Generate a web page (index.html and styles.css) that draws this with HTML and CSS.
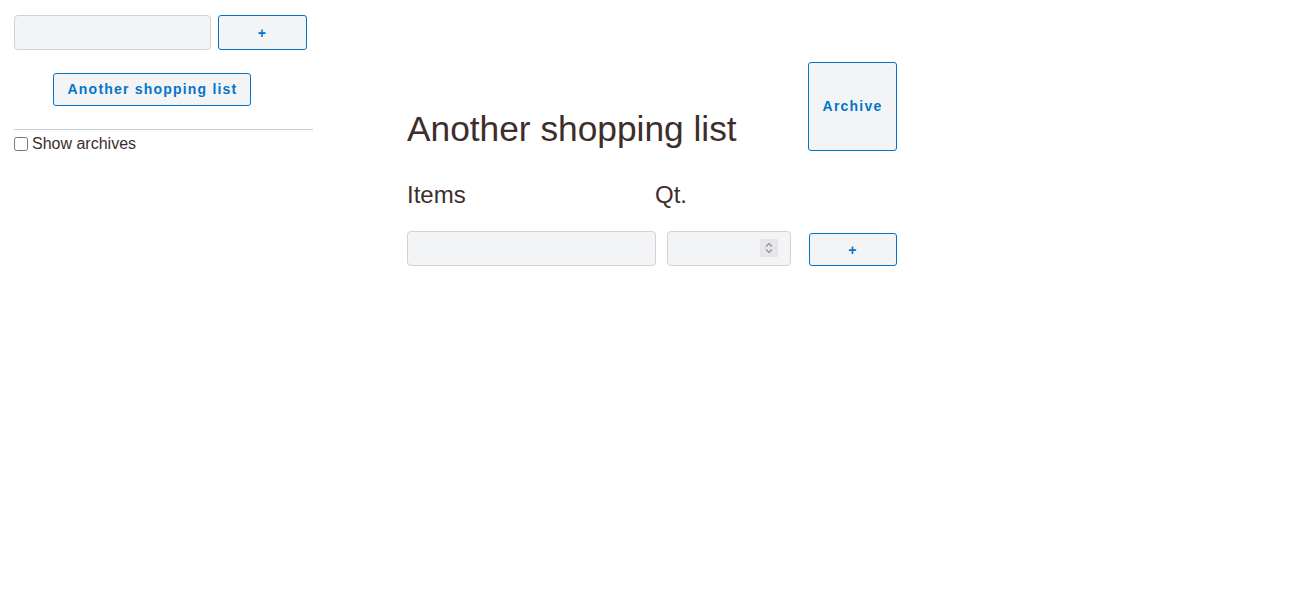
FILE: index.html
```html
<!DOCTYPE html>
<html lang="en">
<head>
<meta charset="utf-8">
<title>Shopping lists</title>
<link rel="stylesheet" href="styles.css">
</head>
<body>
<div class="app">
  <aside class="sidebar">
    <form class="new-list">
      <input class="field list-name" type="text">
      <button class="btn btn-add" type="button">+</button>
    </form>
    <div class="lists">
      <button class="btn btn-list" type="button">Another shopping list</button>
    </div>
    <hr class="divider">
    <label class="archives"><input type="checkbox" class="check">Show archives</label>
  </aside>
  <main class="main">
    <div class="header">
      <h1 class="title">Another shopping list</h1>
      <button class="btn btn-archive" type="button">Archive</button>
    </div>
    <div class="labels">
      <span class="label label-items">Items</span>
      <span class="label">Qt.</span>
    </div>
    <div class="item-row">
      <input class="field item-name" type="text">
      <span class="qty-wrap">
        <input class="field item-qty" type="number">
        <span class="spinner" aria-hidden="true">
          <svg width="18" height="18" viewBox="0 0 18 18"><path d="M6 7.5 L9 4.5 L12 7.5 M6 10.5 L9 13.5 L12 10.5" fill="none" stroke="#8e8e92" stroke-width="1.2"/></svg>
        </span>
      </span>
      <button class="btn btn-add btn-item" type="button">+</button>
    </div>
  </main>
</div>
</body>
</html>
```
FILE: styles.css
```css
html, body {
  margin: 0;
  padding: 0;
  background: #ffffff;
}
body {
  font-family: "Liberation Sans", Arial, sans-serif;
  color: #3d2e2b;
}
.app {
  display: flex;
  padding: 15px 0 0 14px;
}
.sidebar {
  width: 299px;
  flex: none;
}
.new-list {
  display: flex;
  gap: 7px;
  margin: 0;
}
.field {
  box-sizing: border-box;
  height: 35px;
  background: #f3f4f6;
  border: 1px solid #d2d2d4;
  border-radius: 4px;
  padding: 0 8px;
  font-family: "Liberation Sans", Arial, sans-serif;
  font-size: 16px;
  color: #3d2e2b;
  margin: 0;
}
.list-name {
  width: 197px;
}
.btn {
  box-sizing: border-box;
  background: #f3f4f6;
  border: 1px solid #0474cb;
  border-radius: 3px;
  color: #0474cb;
  font-family: "Liberation Sans", Arial, sans-serif;
  font-weight: bold;
  font-size: 14px;
  letter-spacing: 1.2px;
  padding: 0;
  margin: 0;
  white-space: nowrap;
  cursor: pointer;
}
.btn-add {
  width: 89px;
  height: 35px;
}
.lists {
  display: flex;
  margin-top: 23px;
  padding-left: 39px;
}
.btn-list {
  height: 33px;
  width: 198px;
  padding: 0 0 2px 1px;
}
.divider {
  margin: 23px 0 0 0;
  border: 0;
  border-top: 1px solid #cfcfcf;
  height: 0;
}
.archives {
  display: flex;
  align-items: center;
  margin-top: 5px;
  font-size: 16px;
  line-height: 18px;
}
.check {
  margin: 0 4px 0 0;
  width: 14px;
  height: 14px;
}
.main {
  margin-left: 94px;
  width: 490px;
}
.header {
  display: flex;
  justify-content: space-between;
  align-items: flex-end;
  margin-top: 47px;
}
.title {
  font-size: 35.3px;
  font-weight: normal;
  margin: 0 0 2px 0;
  line-height: 40px;
}
.btn-archive {
  width: 89px;
  height: 89px;
  padding-bottom: 2px;
}
.labels {
  display: flex;
  margin-top: 30px;
  font-size: 24px;
  line-height: 28px;
}
.label-items {
  width: 248px;
}
.item-row {
  display: flex;
  align-items: flex-end;
  margin-top: 22px;
}
.item-name {
  width: 249px;
}
.qty-wrap {
  position: relative;
  display: block;
  margin-left: 11px;
  height: 35px;
}
.item-qty {
  width: 124px;
}
.spinner {
  position: absolute;
  left: 93px;
  top: 8px;
  width: 18px;
  height: 18px;
  background: #e6e6ea;
  display: block;
}
.spinner svg {
  display: block;
}
.btn-item {
  width: 88px;
  height: 33px;
  margin-left: 18px;
}
```
